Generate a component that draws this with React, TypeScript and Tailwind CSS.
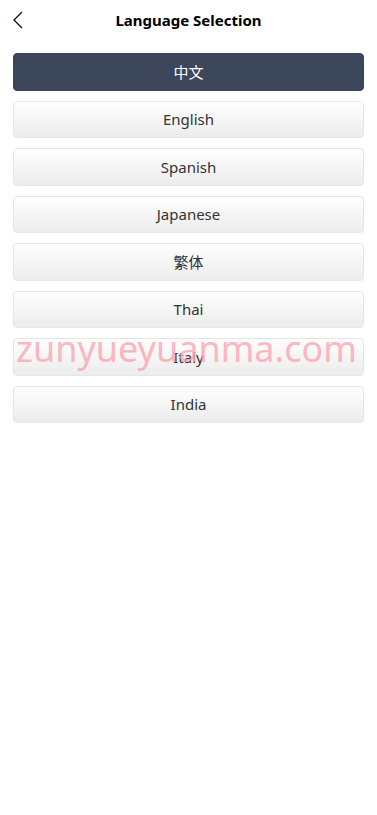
import { useState } from 'react';

const languages = ['中文', 'English', 'Spanish', 'Japanese', '繁体', 'Thai', 'Italy', 'India'];

export default function App() {
  const [selected, setSelected] = useState('中文');

  return (
    <div
      className="relative min-h-[815px] bg-white"
      style={{ fontFamily: '"Noto Sans", "Noto Sans CJK SC", sans-serif' }}
    >
      <header className="relative flex h-[40px] items-center justify-center">
        <button className="absolute left-[12px] top-[11px] text-gray-900" aria-label="Back">
          <svg width="12" height="18" viewBox="0 0 12 18" fill="none" stroke="currentColor" strokeWidth="1.4">
            <polyline points="10,1 2,9 10,17" />
          </svg>
        </button>
        <h1 className="text-[15px] font-bold text-black">Language Selection</h1>
      </header>

      <ul className="flex flex-col gap-[10px] px-[13px] pt-[13px]">
        {languages.map((lang) => (
          <li key={lang}>
            <button
              onClick={() => setSelected(lang)}
              className={
                lang === selected
                  ? 'flex h-[37.5px] w-full items-center justify-center rounded-[4px] border border-[#3b4559] bg-[#3d475c] text-[15px] text-white'
                  : 'flex h-[37.5px] w-full items-center justify-center rounded-[4px] border border-[#e6e6e6] bg-gradient-to-b from-white to-[#ececec] text-[15px] text-[#333]'
              }
            >
              {lang}
            </button>
          </li>
        ))}
      </ul>

      {/* watermark over the list */}
      <div className="pointer-events-none absolute left-[16px] top-[331px] text-[36px] leading-none text-[#ffa5b2] opacity-80">
        zunyueyuanma.com
      </div>
    </div>
  );
}
